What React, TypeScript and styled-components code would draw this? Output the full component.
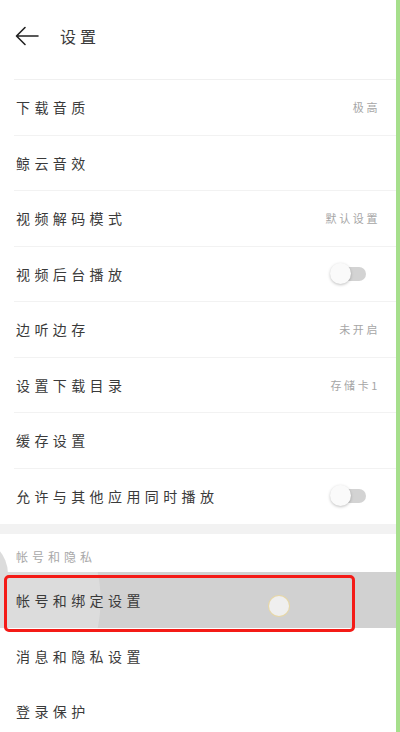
import styled, { createGlobalStyle } from 'styled-components';

const GlobalStyle = createGlobalStyle`
    html, body {
        margin: 0;
        padding: 0;
        background: #ffffff;
    }

    body {
        font-family: 'Noto Sans CJK SC', 'Noto Sans', sans-serif;
        color: #2b2b2b;
    }
`;

type Item = {
    label: string;
    value?: string;
    toggle?: boolean;
};

const mediaItems: Item[] = [
    { label: '下载音质', value: '极高' },
    { label: '鲸云音效' },
    { label: '视频解码模式', value: '默认设置' },
    { label: '视频后台播放', toggle: true },
    { label: '边听边存', value: '未开启' },
    { label: '设置下载目录', value: '存储卡1' },
    { label: '缓存设置' },
    { label: '允许与其他应用同时播放', toggle: true },
];

const BackArrow = () => (
    <svg width='24' height='20' viewBox='0 0 24 20' fill='none'>
        <path
            d='M23 10H2M10 1.5L1.5 10L10 18.5'
            stroke='#222'
            strokeWidth='1.6'
            strokeLinecap='round'
            strokeLinejoin='round'
        />
    </svg>
);

const App = () => {
    return (
        <>
            <GlobalStyle />
            <Screen>
                <Header>
                    <BackArrow />
                    <Title>设置</Title>
                </Header>

                <List>
                    {mediaItems.map(({ label, value, toggle }, i) => (
                        <Row key={label} last={i === mediaItems.length - 1}>
                            <Label>{label}</Label>
                            {value && <Value>{value}</Value>}
                            {toggle && (
                                <Switch>
                                    <Knob />
                                </Switch>
                            )}
                        </Row>
                    ))}
                </List>

                <SectionGap />

                <SectionTitle>帐号和隐私</SectionTitle>

                <PressedRow>
                    <Label>帐号和绑定设置</Label>
                    <TouchDot />
                    <Highlight />
                </PressedRow>
                <Row last>
                    <Label>消息和隐私设置</Label>
                </Row>
                <Row last>
                    <Label>登录保护</Label>
                </Row>
            </Screen>
        </>
    );
};

export default App;

const Screen = styled.div`
    position: relative;
    width: 400px;
    height: 732px;
    overflow: hidden;
    box-sizing: border-box;
    border-right: 4px solid #a6df8c;
    background: #ffffff;
`;

const Header = styled.header`
    display: flex;
    align-items: center;
    gap: 21px;
    height: 80px;
    margin-left: 14px;
    padding: 0 0 8px 1px;
    box-sizing: border-box;
    border-bottom: 1px solid #f0f0f0;
`;

const Title = styled.h1`
    margin: 0;
    font-size: 16px;
    font-weight: 400;
    letter-spacing: 4px;
    color: #3a3a3a;
`;

const List = styled.div`
    display: flex;
    flex-direction: column;
`;

const Row = styled.div<{ last?: boolean }>`
    display: flex;
    align-items: center;
    justify-content: space-between;
    height: 55.5px;
    margin-left: 14px;
    padding: 0 18px 0 2px;
    box-sizing: border-box;
    border-bottom: ${({ last }) => (last ? 'none' : '1px solid #f2f2f2')};
`;

const Label = styled.span`
    font-size: 14px;
    letter-spacing: 4.4px;
    color: #3a3a3a;
    white-space: nowrap;
`;

const Value = styled.span`
    font-size: 11px;
    letter-spacing: 2.6px;
    color: #a6a6a6;
    margin-right: -2px;
`;

const Switch = styled.div`
    position: relative;
    width: 34px;
    height: 14px;
    border-radius: 7px;
    background: #d3d3d3;
    margin-right: 12px;
`;

const Knob = styled.div`
    position: absolute;
    left: -2px;
    top: -4px;
    width: 21px;
    height: 21px;
    border-radius: 50%;
    background: #fafafa;
    box-shadow: 0 1px 3px rgba(0, 0, 0, 0.25);
`;

const SectionGap = styled.div`
    height: 10px;
    background: #f2f2f2;
`;

const SectionTitle = styled.div`
    position: relative;
    height: 38px;
    padding: 14px 0 0 16px;
    box-sizing: border-box;
    font-size: 12px;
    letter-spacing: 4px;
    color: #a8a8a8;

    &::before {
        content: '';
        position: absolute;
        left: -64px;
        top: 4px;
        width: 72px;
        height: 72px;
        border-radius: 50%;
        background: #dcdcdc;
    }
`;

const PressedRow = styled.div`
    position: relative;
    display: flex;
    align-items: center;
    height: 56px;
    padding-left: 16px;
    background: radial-gradient(
        circle at -40px 50%,
        #dcdcdc 0,
        #dcdcdc 140px,
        #d1d1d1 141px
    );
`;

const TouchDot = styled.div`
    position: absolute;
    left: 269px;
    top: 24px;
    width: 20px;
    height: 20px;
    border-radius: 50%;
    background: #efefef;
    box-shadow: 0 0 0 1px #e6d7a8;
`;

const Highlight = styled.div`
    position: absolute;
    left: 4px;
    top: 3px;
    width: 351px;
    height: 57px;
    box-sizing: border-box;
    border: 3px solid #f41b17;
    border-radius: 5px;
`;
